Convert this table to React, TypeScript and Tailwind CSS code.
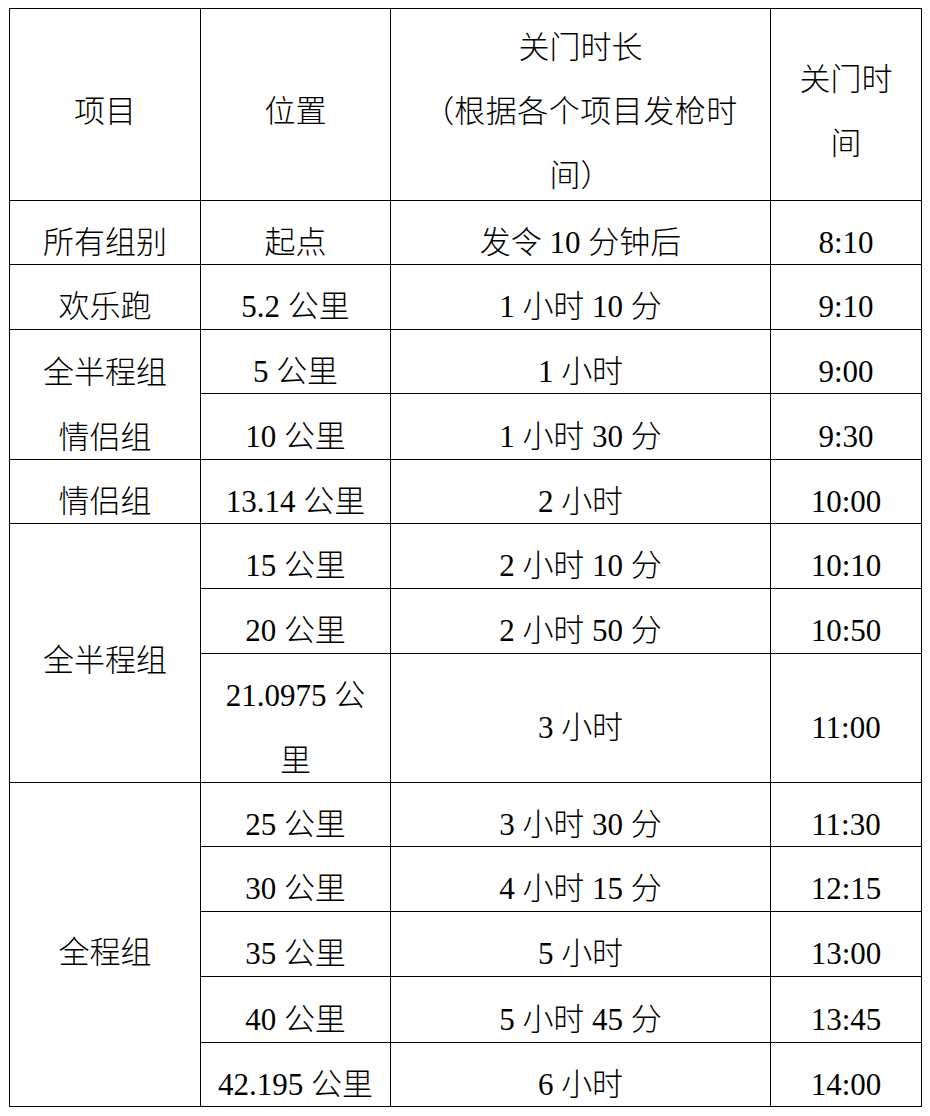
import React from "react";

const cell =
  "bg-white flex flex-col items-center justify-center text-center text-black pt-[20px]";

export default function App() {
  return (
    <div
      className="bg-white min-h-[1116px] w-[930px] pt-[8px] pl-[9px]"
      style={{ fontFamily: '"Liberation Serif", "Noto Sans CJK SC", serif' }}
    >
      <div
        className="grid bg-black gap-px p-px w-[913px] text-[31px] font-light leading-[64px]"
        style={{
          gridTemplateColumns: "190px 189px 379px 150px",
          gridTemplateRows:
            "191px 63px 64px 63px 65px 63px 64px 64px 128px 63px 64px 64px 65px 63px",
        }}
      >
        {/* header */}
        <div className={cell + " !pt-[14px]"}>项目</div>
        <div className={cell + " !pt-[14px]"}>位置</div>
        <div className={cell + " !pt-[14px]"}>
          <span>关门时长</span>
          <span className="flex">
            <span className="inline-block w-[31px] text-right">（</span>
            <span className="tracking-[0.5px]">根据各个项目发枪时</span>
          </span>
          <span className="flex">
            <span>间</span>
            <span className="inline-block w-[31px] text-left">）</span>
          </span>
        </div>
        <div className={cell + " !pt-[14px]"}>
          <span>关门时</span>
          <span>间</span>
        </div>

        {/* 所有组别 */}
        <div className={cell}>所有组别</div>
        <div className={cell}>起点</div>
        <div className={cell}>发令 10 分钟后</div>
        <div className={cell}>8:10</div>

        {/* 欢乐跑 */}
        <div className={cell}>欢乐跑</div>
        <div className={cell}>5.2 公里</div>
        <div className={cell}>1 小时 10 分</div>
        <div className={cell}>9:10</div>

        {/* 全半程组 情侣组 merged */}
        <div className={cell + " row-span-2 leading-[65px]"}>
          <span>全半程组</span>
          <span>情侣组</span>
        </div>
        <div className={cell}>5 公里</div>
        <div className={cell}>1 小时</div>
        <div className={cell}>9:00</div>
        <div className={cell}>10 公里</div>
        <div className={cell}>1 小时 30 分</div>
        <div className={cell}>9:30</div>

        {/* 情侣组 */}
        <div className={cell}>情侣组</div>
        <div className={cell}>13.14 公里</div>
        <div className={cell}>2 小时</div>
        <div className={cell}>10:00</div>

        {/* 全半程组 span 3 */}
        <div className={cell + " row-span-3 !pt-[16px]"}>全半程组</div>
        <div className={cell}>15 公里</div>
        <div className={cell}>2 小时 10 分</div>
        <div className={cell}>10:10</div>
        <div className={cell}>20 公里</div>
        <div className={cell}>2 小时 50 分</div>
        <div className={cell}>10:50</div>
        <div className={cell + " leading-[65px]"}>
          <span>21.0975 公</span>
          <span>里</span>
        </div>
        <div className={cell}>3 小时</div>
        <div className={cell}>11:00</div>

        {/* 全程组 span 5 */}
        <div className={cell + " row-span-5 !pt-[16px]"}>全程组</div>
        <div className={cell}>25 公里</div>
        <div className={cell}>3 小时 30 分</div>
        <div className={cell}>11:30</div>
        <div className={cell}>30 公里</div>
        <div className={cell}>4 小时 15 分</div>
        <div className={cell}>12:15</div>
        <div className={cell}>35 公里</div>
        <div className={cell}>5 小时</div>
        <div className={cell}>13:00</div>
        <div className={cell}>40 公里</div>
        <div className={cell}>5 小时 45 分</div>
        <div className={cell}>13:45</div>
        <div className={cell}>42.195 公里</div>
        <div className={cell}>6 小时</div>
        <div className={cell}>14:00</div>
      </div>
    </div>
  );
}
